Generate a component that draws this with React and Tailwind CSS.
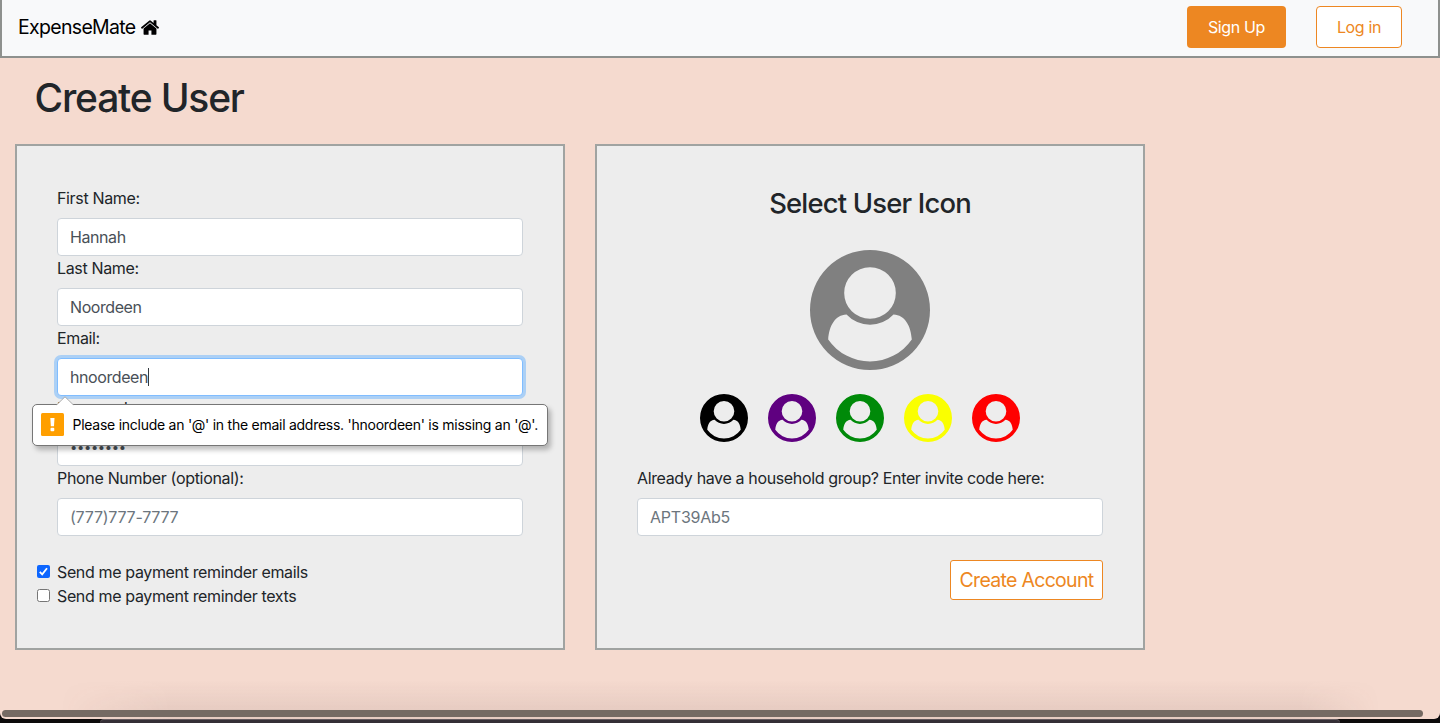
function HomeIcon({ className }) {
  return (
    <svg viewBox="26 253 1612 1283" className={className} fill="currentColor" aria-hidden="true">
      <path d="M1408 992v480q0 26-19 45t-45 19H960v-384H704v384H320q-26 0-45-19t-19-45V992q0-1 .5-3t.5-3l575-474 575 474q1 2 1 6zm223-69l-62 74q-8 9-21 11h-3q-13 0-21-7L832 424l-692 577q-12 8-24 7-13-2-21-11l-62-74q-8-10-7-23.5T37 878l719-599q32-26 76-26t76 26l244 204V288q0-14 9-23t23-9h192q14 0 23 9t9 23v408l219 182q10 8 11 21.5t-7 23.5z" />
    </svg>
  );
}

function UserIcon({ className }) {
  return (
    <svg viewBox="0 0 120 120" className={className} fill="currentColor" aria-hidden="true">
      <path
        fillRule="evenodd"
        d="M60 0a60 60 0 1 1 0 120a60 60 0 1 1 0-120ZM60 17.2a25.8 25.8 0 1 0 0 51.6a25.8 25.8 0 1 0 0-51.6ZM36.5 64.5C25 65 19 76 18.2 89.6A51 51 0 0 0 101.8 89.6C101 76 95 65 83.5 64.5A32 32 0 0 1 36.5 64.5Z"
      />
    </svg>
  );
}

const inputBase =
  "block h-[38px] w-full rounded border bg-white px-3 text-[#495057] outline-none placeholder:tracking-[-0.23px] placeholder:text-[#6c757d]";

function Field({
  label,
  labelClass = "tracking-[-0.35px]",
  borderClass = "border-[#ced4da]",
  textClass = "text-base tracking-[-0.42px]",
  children,
  ...props
}) {
  return (
    <div className="relative">
      <label className="mb-2 block">
        <span className={labelClass}>{label}</span>
      </label>
      <input className={`${inputBase} ${borderClass} ${textClass}`} {...props} />
      {children}
    </div>
  );
}

function ValidationBubble() {
  return (
    <div className="absolute top-[78px] -left-[25px] z-10 flex h-[42px] w-[516px] items-center rounded-[5px] border border-[#767676] bg-white pl-2 shadow-[3px_4px_5px_rgba(0,0,0,0.25)]">
      <svg className="absolute -top-[9px] left-[23px] h-[10px] w-[18px]" viewBox="0 0 18 10">
        <path d="M0.5 10 V9 L9 0.8 L17.5 9 V10Z" fill="#fff" />
        <path d="M0.8 8.7 L9 0.8 L17.2 8.7" fill="none" stroke="#999" strokeWidth="0.8" />
      </svg>
      <svg className="h-[23px] w-[23px] shrink-0 -translate-y-[1px]" viewBox="0 0 23 23">
        <rect width="23" height="23" rx="1.5" fill="#ff9f00" />
        <path d="M9.3 5h4.2l-.5 8.2H9.8Z" fill="#fff" />
        <rect x="9.5" y="14.8" width="3.8" height="3.4" rx="1" fill="#fff" />
      </svg>
      <span className="ml-[8.5px] text-[14px] tracking-[-0.258px] whitespace-nowrap text-black">
        Please include an '@' in the email address. 'hnoordeen' is missing an '@'.
      </span>
    </div>
  );
}

function Check({ checked, label }) {
  return (
    <label className="-ml-5 flex h-6 items-center">
      <svg className="mr-[7px] h-[13px] w-[13px] shrink-0 -translate-y-[1px]" viewBox="0 0 13 13">
        {checked ? (
          <>
            <rect width="13" height="13" rx="2" fill="#0d66ff" />
            <path d="M2.8 6.8 5.2 9.3 10 3.2" fill="none" stroke="#fff" strokeWidth="1.8" />
          </>
        ) : (
          <rect x="0.5" y="0.5" width="12" height="12" rx="2" fill="#fff" stroke="#767676" />
        )}
      </svg>
      <span className="tracking-[-0.36px]">{label}</span>
    </label>
  );
}

const panel = "h-[506px] w-[550px] shrink-0 border-2 border-[#a0a3a1] bg-[#ededed] p-10";

export default function App() {
  return (
    <div className="h-[723px] w-[1440px] overflow-hidden bg-[#0c0a0b] font-[Inter,sans-serif] text-base leading-6 text-[#212529]">
      <div className="relative flex h-[719px] flex-col overflow-hidden rounded-b-[6px] bg-[#f5dacf]">
        <header className="flex h-[58px] shrink-0 items-start justify-between border-x-2 border-b-2 border-[#8e918e] bg-[#f8f9fa] pr-9 pl-4">
          <a className="flex h-[54px] items-center text-[19.5px] text-black">
            <span className="tracking-[-0.68px]">ExpenseMate</span>
            <HomeIcon className="ml-[5px] h-[15px] w-[18px]" />
          </a>
          <div className="flex gap-[30px] pt-[6px]">
            <button className="h-[42px] w-[99px] rounded bg-[#ed8722] tracking-[-0.36px] text-white">Sign Up</button>
            <button className="h-[42px] w-[86px] rounded border border-[#ed8722] bg-white tracking-[-0.36px] text-[#ed8722]">
              Log in
            </button>
          </div>
        </header>

        <h1 className="mt-4 ml-[34.5px] text-[39px] leading-[48px] font-medium tracking-[-1.2px]">Create User</h1>

        <main className="mt-[22px] flex gap-[30px] pl-[15px]">
          <section className={panel}>
            <Field label="First Name:" defaultValue="Hannah" />
            <Field label="Last Name:" defaultValue="Noordeen" />
            <Field
              label="Email:"
              borderClass="border-[#80bdff] shadow-[0_0_0_3px_#acd0f5]"
              defaultValue="hnoordeen"
            >
              <span className="absolute top-[42px] left-[91px] h-[18px] w-px bg-[#343a40]" />
              <ValidationBubble />
            </Field>
            <Field
              label="Password:"
              labelClass="tracking-[-0.45px]"
              textClass="text-[13px] tracking-[-0.35px]"
              type="password"
              defaultValue="password"
            />
            <Field label="Phone Number (optional):" labelClass="tracking-[-0.32px]" placeholder="(777)777-7777" />
            <div className="mt-6">
              <Check checked label="Send me payment reminder emails" />
              <Check label="Send me payment reminder texts" />
            </div>
          </section>

          <section className={panel}>
            <h2 className="text-center text-[27.4px] leading-[34px] font-medium tracking-[-0.8px]">Select User Icon</h2>
            <UserIcon className="mx-auto mt-[30px] h-[120px] w-[120px] text-[#808080]" />
            <div className="mt-6 mb-6 flex justify-center gap-5 pr-5">
              <UserIcon className="h-12 w-12 text-black" />
              <UserIcon className="h-12 w-12 text-[#5f0080]" />
              <UserIcon className="h-12 w-12 text-[#008a09]" />
              <UserIcon className="h-12 w-12 text-[#faff00]" />
              <UserIcon className="h-12 w-12 text-[#ff0000]" />
            </div>
            <Field
              label="Already have a household group? Enter invite code here:"
              labelClass="tracking-[-0.36px]"
              placeholder="APT39Ab5"
            />
            <div className="mt-6 flex justify-end">
              <button className="h-10 w-[153px] rounded-[3px] border border-[#ed8722] bg-white text-[19.5px] tracking-[-0.7px] whitespace-nowrap text-[#ed8722]">
                Create Account
              </button>
            </div>
          </section>
        </main>

        <div className="mt-auto h-[39px] bg-[linear-gradient(to_bottom,transparent,rgba(90,60,60,0.09)_80%)] [mask-image:linear-gradient(to_right,transparent_60px,black_170px,black_1300px,transparent_1380px)]" />
        <div className="absolute bottom-[2px] left-[2px] h-[7px] w-[1421px] rounded-full bg-[#756a63]" />
      </div>
      <div className="mx-auto h-1 w-[1240px] rounded-t-[4px] border-t border-[#655b60] bg-[#342e35]" />
    </div>
  );
}
